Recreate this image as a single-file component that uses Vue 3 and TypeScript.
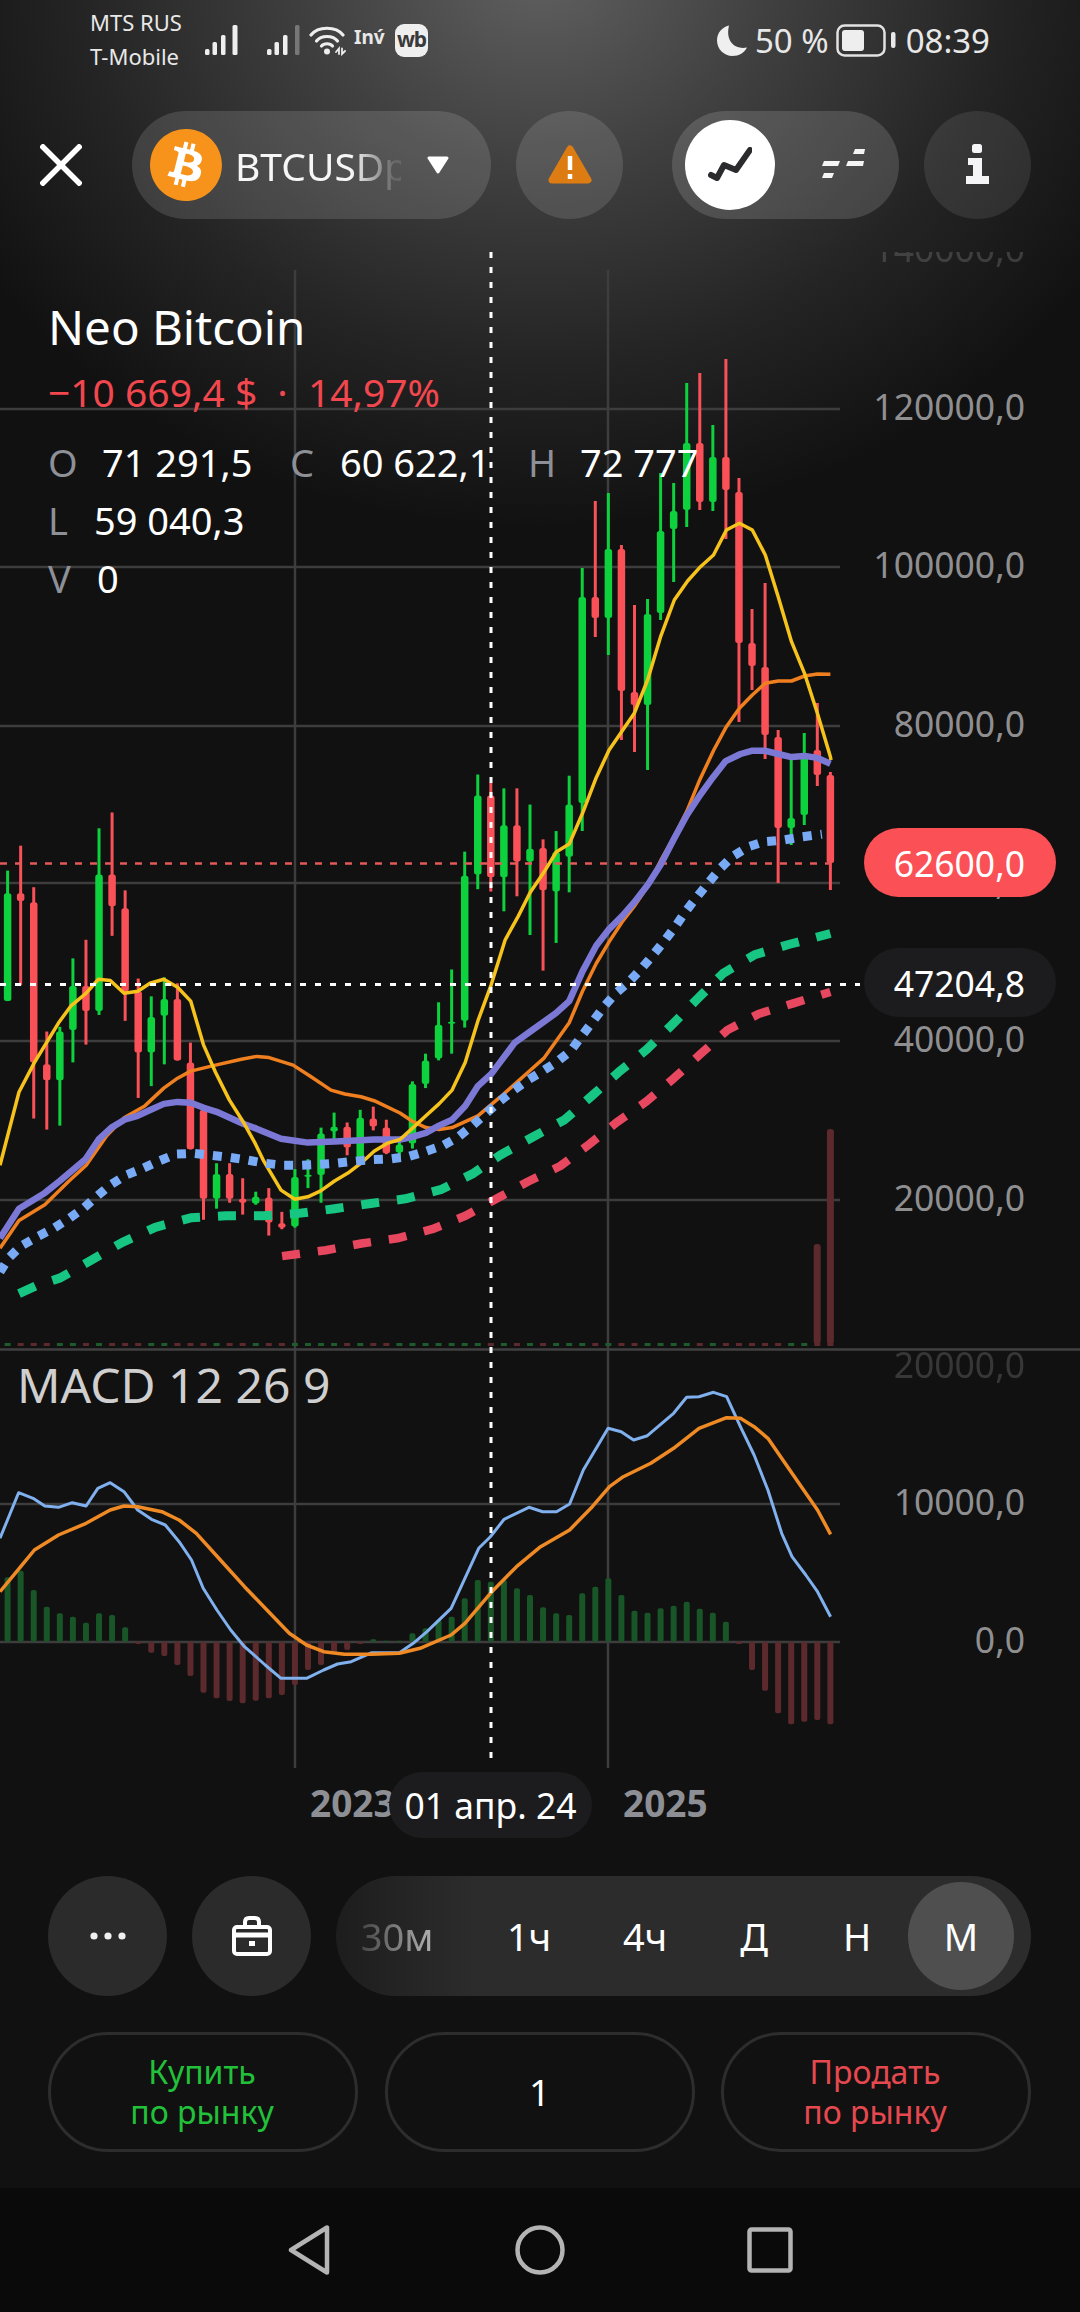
<script setup lang="ts">
type Candle = [number, number, number, number, number]
const STEP = 13.06
const xOf = (i: number) => 7.6 + STEP * i
const yA = (z: number) => 750 + z / 2.529

const earlyCandles: Candle[] = [
  [305,362,635,635,1],[242,362,382,595,0],[347,385,790,932,0],[712,795,835,960,0],[700,712,835,950,1],
  [527,597,708,790,1],[480,597,660,745,0],[198,315,660,670,1],[158,315,395,470,0],[355,400,610,685,0],
  [578,610,765,880,0],[623,675,765,850,1],[575,630,672,795,1],[590,630,785,785,0],[740,790,1010,1010,0],
  [910,910,1135,1188,0],[1045,1072,1135,1160,1],[1045,1072,1135,1145,0],[1083,1135,1145,1175,0],[1117,1130,1147,1150,1],
  [1108,1132,1195,1228,0],[1168,1197,1208,1212,0],[1060,1080,1205,1208,1],[1035,1074,1077,1108,1],[955,970,1075,1145,1],
  [917,953,965,995,1],[942,953,1005,1025,0],[910,930,1035,1040,1],[902,932,952,962,0],[935,955,1020,1022,0],
  [985,998,1018,1040,1],[838,845,995,1008,1],[768,785,845,855,1],[638,695,780,785,1],[555,687,690,768,1],
  [257,318,685,702,1],[62,115,315,352,1],[82,115,322,358,0],[97,190,322,408,1],[97,190,282,370,0],
  [138,250,282,468,1],[226,248,355,558,0],[205,258,358,488,1],[65,138,270,360,1]
]
const lateCandles: Candle[] = [
  [568,597,803,831,1],[501,597,618,637,0],[493,549,618,655,1],[545,549,691,740,0],[605,692,705,752,0],
  [599,614,705,770,1],[473,531,613,620,1],[483,511,529,582,1],[383,443,510,527,1],[373,443,502,510,0],
  [425,457,502,511,1],[359,457,490,539,0],[478,492,643,722,0],[609,643,666,690,0],[583,667,735,759,0],
  [730,737,828,883,0],[758,818,828,845,1],[733,753,815,825,1],[703,750,775,786,0],[772,775,863,890,0]
]
const candles = [
  ...earlyCandles.map((c) => [yA(c[0]), yA(c[1]), yA(c[2]), yA(c[3]), c[4]]),
  ...lateCandles
].map((c, i) => ({
  i, x: xOf(i), wickTop: c[0], bodyTop: c[1], bodyH: Math.max(c[2] - c[1], 2), wickBottom: c[3],
  color: c[4] ? '#0ed13e' : '#fa5158',
  volume: c[4] ? '#1d5a2c' : '#5c2a2c'
}))

const join = (list: number[], fx: (v: number) => number, fy: (v: number) => number) => {
  const out: string[] = []
  for (let k = 0; k < list.length; k += 2) out.push(`${fx(list[k]).toFixed(1)},${fy(list[k + 1]).toFixed(1)}`)
  return out.join(' ')
}
const leftX = (z: number) => z / 2.9
const rightX = (z: number) => 500 + z / 2.703
const yC = (z: number) => 250 + z / 3
const macdX = (z: number) => z / 1.452
const macdY = (z: number) => 1370 + z / 3

const yellow = [
  join([0,1050,55,865,100,790,170,690,205,648,250,615,285,580,320,583,360,615,400,610,435,590,475,580,515,600,553,635,590,745,625,815,665,885,705,940,740,995,765,1040,815,1113,855,1136,893,1130,930,1115,970,1090,1009,1070,1047,1045,1085,1015,1122,995,1160,985,1198,955,1235,925,1273,895,1311,860,1349,790,1386,685,1424,595,1465,480,1503,420], leftX, yA),
  join([82,360,118,310,152,258,187,238,223,160,260,70,295,0], rightX, yA),
  join([363,1390,399,1290,434,1160,471,1050,507,993,542,950,577,915,612,840,647,820,682,840,717,915,752,1040,788,1175,823,1270,858,1390,893,1520], rightX, yC),
  '831,760'
].join(' ')
const orange = [
  join([0,1260,55,1190,130,1150,200,1090,250,1050,310,975,360,930,420,900,475,855,515,830,553,812,625,797,700,782,745,775,780,778,850,797,900,825,960,860,1000,870,1047,877,1085,887,1160,918,1198,940,1235,955,1273,960,1311,955,1349,940,1386,925], leftX, yA),
  join([0,878,40,845,82,810,118,780,187,690,223,610,260,540,295,485,330,435,363,395,399,345,434,280,470,220,505,155,540,75,578,0], rightX, yA),
  join([612,1430,647,1375,682,1335,717,1300,752,1293,788,1293,823,1278,858,1272,893,1273], rightX, yC)
].join(' ')
const purple = [
  join([0,1235,55,1160,130,1120,173,1090,248,1035,286,985,323,955,361,935,399,925,437,910,475,895,515,890,553,892,591,905,628,915,705,945,742,957,815,983,855,988,893,993,970,990,1047,987,1085,985,1160,985,1198,978,1235,968,1273,950,1311,935,1349,900,1386,850,1424,820], leftX, yA),
  join([0,790,40,740,82,712,152,665,187,635,223,560,260,495,293,455,330,420,363,385,400,340,434,290,470,225,505,165,540,115,575,70,610,28,650,10,680,2,718,2,752,10,788,18,823,15,858,20,893,35], rightX, yA)
].join(' ')
const blue = [
  join([0,1320,25,1285,60,1255,110,1230,155,1210,200,1185,240,1160,282,1128,320,1100,365,1075,415,1058,460,1040,510,1022,560,1020,612,1025,665,1030,717,1037,768,1045,820,1050,872,1050,925,1048,977,1045,1030,1040,1080,1036,1132,1034,1185,1028,1235,1015,1285,1000,1330,978,1370,950], leftX, yA),
  join([0,888,35,862,75,835,115,812,155,788,192,760,222,722,252,685,282,648,313,615,350,585,383,552,414,518,445,482,475,445,502,408,532,372,562,337,595,300,627,270,670,245,713,232,763,228,813,220,870,213], rightX, yA)
].join(' ')
const teal = [
  join([55,1375,105,1355,175,1335,265,1290,355,1245,450,1207,553,1183,655,1178,762,1178,865,1172,970,1160,1075,1147,1175,1135,1278,1112,1370,1072], leftX, yA),
  join([0,1025,90,978,175,935,248,875,320,815,397,757,465,695,533,630,603,565,688,518,780,492,893,464], rightX, yA)
].join(' ')
const crimson = [
  join([818,1280,945,1265,1048,1248,1152,1235,1253,1212,1350,1178], leftX, yA),
  join([0,1130,75,1092,163,1052,240,998,318,940,397,888,470,830,543,768,615,708,700,667,795,640,893,612], rightX, yA)
].join(' ')
const macdBlue = join([0,505,27,368,48,385,65,408,85,412,105,398,125,408,142,355,160,338,180,365,200,420,220,448,240,465,260,515,278,570,295,655,315,720,335,780,355,830,385,885,408,925,445,925,470,900,490,882,510,875,540,848,580,848,600,820,620,785,655,715,675,625,695,535,712,500,732,448,768,412,788,425,808,425,827,402,847,300,883,175,902,185,920,210,940,197,978,130,997,82,1015,80,1036,67,1055,80,1075,170,1095,255,1115,360,1135,490,1150,560,1170,615,1187,665,1206,740], macdX, macdY)
const macdOrange = join([0,665,30,590,50,540,85,495,125,460,160,420,180,408,200,410,235,425,260,450,285,490,320,570,355,650,390,725,420,790,445,825,470,845,500,853,540,853,580,850,610,835,655,795,675,760,712,670,750,590,785,530,827,480,860,410,885,350,905,320,945,280,978,235,1015,175,1055,143,1075,145,1095,170,1115,205,1150,310,1187,420,1206,493], macdX, macdY)

const histTops = [622,602,660,710,730,740,758,730,735,772,822,848,858,885,918,968,985,993,1000,992,985,975,945,900,885,848,840,822,808,812,812,790,775,750,740,685,630,635,630,655,675,712,730,735,670,650,625,675,722,728,715,707,695,716,728,755,822,900,962,1030,1063,1055,1050,1063]
const ZERO = macdY(815)
const hist = histTops.map((t, i) => {
  const top = macdY(t)
  const up = top < ZERO
  return { i, x: xOf(i) - 3, y: up ? top : ZERO, h: Math.abs(top - ZERO), color: up ? '#185527' : '#5c2a2c' }
})

const gridMain = [409, 567, 726, 883, 1041, 1200]
const axisMain = [
  { t: '120000,0', y: 420 }, { t: '100000,0', y: 578 }, { t: '80000,0', y: 737 },
  { t: '60000,0', y: 894 }, { t: '40000,0', y: 1052 }, { t: '20000,0', y: 1211 }
]
const frames = [
  { label: '30м', cls: 'tf-faded' }, { label: '1ч', cls: '' }, { label: '4ч', cls: '' },
  { label: 'Д', cls: '' }, { label: 'Н', cls: '' }, { label: 'М', cls: 'tf-active' }
]
</script>

<template>
  <div class="screen">
    <header class="status">
      <div class="status-left">
        <div class="carrier"><span>MTS RUS</span><span>T-Mobile</span></div>
        <svg class="signal" width="34" height="30" viewBox="0 0 34 30" fill="#eee">
          <rect x="0" y="24" width="4.5" height="6" rx="1.5" /><rect x="7.5" y="17" width="4.5" height="13" rx="1.5" />
          <rect x="16" y="10" width="4.5" height="20" rx="1.5" /><rect x="27.5" y="0" width="5" height="30" rx="1.5" />
        </svg>
        <svg class="signal second" width="34" height="30" viewBox="0 0 34 30" fill="#eee">
          <rect x="0" y="24" width="4.5" height="6" rx="1.5" /><rect x="7.5" y="17" width="4.5" height="13" rx="1.5" />
          <rect x="16" y="10" width="4.5" height="20" rx="1.5" /><rect x="28" y="0" width="4.5" height="30" rx="1.5" fill="#777" />
        </svg>
        <svg class="wifi" width="38" height="32" viewBox="0 0 38 32" fill="none" stroke="#eee" stroke-width="3.2" stroke-linecap="round">
          <path d="M2 11 C9 2 27 2 34 11" /><path d="M7.5 17 C12 11 24 11 28.5 17" /><path d="M12.5 22 C15 19 21 19 23.5 22" />
          <circle cx="18" cy="27.5" r="3" fill="#eee" stroke="none" />
          <path d="M27 28 L30 24.5 V30 M33 24.5 V30 L36 27" stroke-width="1.8" />
        </svg>
        <span class="inv">Inv&#769;</span>
        <span class="wb">wb</span>
      </div>
      <div class="status-right">
        <svg width="31" height="31" viewBox="0 0 31 31" fill="#efefef">
          <path d="M12 .5 C5 2 0 8 0 15.5 C0 24 7 31 15.5 31 C22 31 27.5 27.5 30 22.5 C19 25 8 17 12 .5 Z" />
        </svg>
        <span class="pct">50 %</span>
        <svg class="battery" width="60" height="33" viewBox="0 0 60 33" fill="none">
          <rect x="1.5" y="1.5" width="47" height="30" rx="7" stroke="#e2e2e2" stroke-width="2.5" />
          <rect x="6" y="6" width="22" height="21" rx="3" fill="#eee" />
          <rect x="55" y="8" width="4.5" height="16" rx="2" fill="#e8e8e8" />
        </svg>
        <span class="clock">08:39</span>
      </div>
    </header>

    <nav class="topbar">
      <svg class="close" width="42" height="42" viewBox="0 0 42 42" stroke="#fff" stroke-width="5.5"><path d="M1 1 L41 41 M41 1 L1 41" /></svg>
      <div class="symbol">
        <svg class="coin" width="72" height="72" viewBox="0 0 24 24">
          <circle cx="12" cy="12" r="10" fill="#fff" />
          <path fill="#f7931a" d="M23.638 14.904c-1.602 6.43-8.113 10.34-14.542 8.736C2.67 22.05-1.244 15.525.362 9.105 1.962 2.67 8.475-1.243 14.9.358c6.43 1.605 10.342 8.115 8.738 14.548v-.002zm-6.35-4.613c.24-1.59-.974-2.45-2.64-3.03l.54-2.153-1.315-.33-.525 2.107c-.345-.087-.705-.167-1.064-.25l.526-2.127-1.32-.33-.54 2.165c-.285-.067-.565-.132-.84-.2l-1.815-.45-.35 1.407s.975.225.955.236c.535.136.63.486.615.766l-1.477 5.92c-.075.166-.24.406-.614.314.015.02-.96-.24-.96-.24l-.66 1.51 1.71.426.93.242-.54 2.19 1.32.327.54-2.17c.36.1.705.19 1.05.273l-.51 2.154 1.32.33.545-2.19c2.24.427 3.93.257 4.64-1.774.57-1.637-.03-2.58-1.217-3.196.854-.193 1.5-.76 1.68-1.93h.01zm-3.01 4.22c-.404 1.64-3.157.75-4.05.53l.72-2.9c.896.23 3.757.67 3.33 2.37zm.41-4.24c-.37 1.49-2.662.735-3.405.55l.654-2.64c.744.18 3.137.524 2.75 2.084v.006z" />
        </svg>
        <span class="ticker">BTCUSDp</span>
        <svg class="caret" width="22" height="18" viewBox="0 0 22 18" fill="#fff" stroke="#fff" stroke-width="3" stroke-linejoin="round"><path d="M2 2 H20 L11 16 Z" /></svg>
      </div>
      <div class="round alert">
        <svg width="44" height="40" viewBox="0 0 44 40">
          <path d="M22 4 L40 35 H4 Z" fill="#dd7c12" stroke="#dd7c12" stroke-width="7" stroke-linejoin="round" />
          <path d="M22 11 V25 M22 29 V34" stroke="#fff" stroke-width="4.5" />
        </svg>
      </div>
      <div class="mode">
        <div class="mode-on">
          <svg width="44" height="36" viewBox="0 0 44 36" fill="none" stroke="#2b2b2e" stroke-width="6" stroke-linejoin="round" stroke-linecap="round">
            <path d="M3 28 L9 31 L16 18 L28 23 L42 3" />
          </svg>
        </div>
        <svg class="mode-off" width="44" height="32" viewBox="0 0 44 32" fill="#f4f4f4">
          <path d="M3 12 H19 L17 17 H1 Z M3 24 H13 L11 29 H1 Z M27 12 H43 L42 17 H25 Z M34 0 H44 L43 5 H32 Z" />
        </svg>
      </div>
      <div class="round info">
        <svg width="24" height="42" viewBox="0 0 24 42" fill="#f5f5f7">
          <rect x="6" y="0" width="10" height="9" rx="2.5" />
          <path d="M2 14 H16 V32 H23 V40 H0 V32 H7 V21 H2 Z" />
        </svg>
      </div>
    </nav>

    <main class="chart">
      <svg class="plot" width="1080" height="1588" viewBox="0 252 1080 1588">
        <g stroke="#3d3d3d" stroke-width="2.5">
          <line v-for="y in gridMain" :key="y" x1="0" x2="840" :y1="y" :y2="y" />
          <line x1="0" x2="840" y1="1504" y2="1504" />
          <line x1="0" x2="840" y1="1642" y2="1642" />
          <line x1="295" x2="295" y1="270" y2="1768" />
          <line x1="608" x2="608" y1="270" y2="1768" />
        </g>
        <line x1="0" x2="1080" y1="1349.5" y2="1349.5" stroke="#404040" stroke-width="2.5" />

        <text class="axis faint" x="1025" y="262">140000,0</text>
        <text v-for="a in axisMain" :key="a.t" class="axis" x="1025" :y="a.y">{{ a.t }}</text>
        <text class="axis faint" x="1025" y="1378">20000,0</text>
        <text class="axis" x="1025" y="1515">10000,0</text>
        <text class="axis" x="1025" y="1653">0,0</text>
        <text class="year" x="310" y="1817">2023</text>
        <text class="year" x="623" y="1817">2025</text>
        <text class="macd-title" x="17" y="1403">MACD 12 26 9</text>

        <g v-for="c in candles" :key="c.i">
          <rect :x="c.x - 3" y="1343" width="6" height="3" :fill="c.volume" />
          <line :x1="c.x" :x2="c.x" :y1="c.wickTop" :y2="c.wickBottom" :stroke="c.color" stroke-width="3" />
          <rect :x="c.x - 3.75" :y="c.bodyTop" width="7.5" :height="c.bodyH" rx="2.5" :fill="c.color" />
        </g>
        <rect x="813.7" y="1244" width="7" height="100" rx="3" fill="#5c2a2c" />
        <rect x="826.9" y="1129" width="7" height="215" rx="3" fill="#5c2a2c" />

        <line x1="0" x2="830" y1="863.5" y2="863.5" stroke="#e35a5a" stroke-width="2.5" stroke-dasharray="7 8" />

        <g fill="none" stroke-linejoin="round">
          <polyline :points="orange" stroke="#f0801f" stroke-width="3.5" />
          <polyline :points="purple" stroke="#7c79d6" stroke-width="6.5" />
          <polyline :points="yellow" stroke="#f6c21c" stroke-width="3.5" />
          <polyline :points="blue" stroke="#78aaf6" stroke-width="9" stroke-dasharray="9 9" />
          <polyline :points="teal" stroke="#17c682" stroke-width="9" stroke-dasharray="18 18" />
          <polyline :points="crimson" stroke="#e7475f" stroke-width="8.5" stroke-dasharray="18 18" />
        </g>

        <rect v-for="h in hist" :key="h.i" :x="h.x" :y="h.y" width="6" :height="h.h" rx="2" :fill="h.color" />
        <g fill="none" stroke-linejoin="round">
          <polyline :points="macdBlue" stroke="#80b0ee" stroke-width="3" />
          <polyline :points="macdOrange" stroke="#ef8a24" stroke-width="3.5" />
        </g>

        <line x1="491" x2="491" y1="252" y2="1762" stroke="#fff" stroke-width="3" stroke-dasharray="6 9" />
        <line x1="0" x2="860" y1="984.5" y2="984.5" stroke="#fff" stroke-width="3" stroke-dasharray="6 9" />
      </svg>

      <section class="legend">
        <h1 class="name">Neo Bitcoin</h1>
        <p class="change">−10 669,4 $ <span class="sep">·</span> 14,97%</p>
        <div class="row row-ohlc"><span class="k">O</span><span>71 291,5</span><span class="k">C</span><span>60 622,1</span><span class="k">H</span><span>72 777</span></div>
        <div class="row row-l"><span class="k">L</span><span>59 040,3</span></div>
        <div class="row row-v"><span class="k">V</span><span>0</span></div>
      </section>

      <div class="tag tag-price">62600,0</div>
      <div class="tag tag-cross">47204,8</div>
      <div class="tag tag-date">01 апр. 24</div>
    </main>

    <section class="tools">
      <div class="tool">
        <svg width="36" height="8" viewBox="0 0 36 8" fill="#f0f0f0"><circle cx="4" cy="4" r="3.6" /><circle cx="18" cy="4" r="3.6" /><circle cx="32" cy="4" r="3.6" /></svg>
      </div>
      <div class="tool">
        <svg width="40" height="40" viewBox="0 0 40 40" fill="none" stroke="#fff" stroke-width="4">
          <path d="M13 11 V6 Q13 2 17 2 H23 Q27 2 27 6 V11" />
          <rect x="2" y="11" width="36" height="27" rx="3" />
          <path d="M2 19 H38" stroke-width="5" />
          <rect x="17" y="25" width="6" height="5" fill="#fff" stroke="none" />
        </svg>
      </div>
      <div class="frames">
        <span v-for="f in frames" :key="f.label" class="tf" :class="f.cls">{{ f.label }}</span>
      </div>
    </section>

    <section class="actions">
      <button class="act buy">Купить<br />по рынку</button>
      <button class="act qty">1</button>
      <button class="act sell">Продать<br />по рынку</button>
    </section>

    <footer class="navbar">
      <svg width="42" height="50" viewBox="0 0 42 50" fill="none" stroke="#b4b4b4" stroke-width="4.5" stroke-linejoin="round"><path d="M39 2.5 V47.5 L3 25 Z" /></svg>
      <svg width="50" height="50" viewBox="0 0 50 50" fill="none" stroke="#b4b4b4" stroke-width="4.5"><circle cx="25" cy="25" r="22.5" /></svg>
      <svg class="recent" width="46" height="46" viewBox="0 0 46 46" fill="none" stroke="#b4b4b4" stroke-width="4.5" stroke-linejoin="round"><rect x="2.5" y="2.5" width="41" height="41" rx="2" /></svg>
    </footer>
  </div>
</template>

<style scoped>
.screen {
  width: 1080px;
  height: 2312px;
  overflow: hidden;
  display: flex;
  flex-direction: column;
  color: #fff;
  font-family: "Noto Sans", "Open Sans", sans-serif;
  background:
    radial-gradient(ellipse 660px 560px at 540px -30px, #606060 0%, #404040 35%, #242424 70%, #111 100%),
    #111;
  background-repeat: no-repeat;
}
.status {
  height: 80px;
  flex: none;
  display: flex;
  justify-content: space-between;
  align-items: center;
  padding: 0 90px;
  color: #e8e8e8;
}
.status-left, .status-right { display: flex; align-items: center; }
.carrier {
  display: flex;
  flex-direction: column;
  font-size: 22px;
  line-height: 34px;
  width: 115px;
  margin-top: -2px;
  white-space: nowrap;
}
.signal.second { margin-left: 28px; }
.wifi { margin-left: 8px; }
.inv { font-size: 19px; font-weight: 700; margin-left: 7px; width: 35px; margin-top: -7px; }
.wb {
  width: 33px;
  height: 33px;
  background: #efefef;
  color: #3a3a3a;
  border-radius: 9px;
  font-size: 21px;
  font-weight: 700;
  line-height: 30px;
  text-align: center;
  letter-spacing: -1px;
  margin-left: 6px;
}
.pct { font-size: 33px; margin-left: 7px; }
.battery { margin-left: 7px; }
.clock { font-size: 33px; margin-left: 10px; }

.topbar {
  flex: none;
  margin-top: 31px;
  height: 108px;
  display: flex;
  align-items: center;
  padding-left: 40px;
}
.symbol {
  width: 359px;
  height: 108px;
  margin-left: 50px;
  border-radius: 54px;
  background: rgba(255, 255, 255, 0.13);
  display: flex;
  align-items: center;
  padding-left: 18px;
  box-sizing: border-box;
  flex: none;
}
.ticker {
  width: 166px;
  margin-left: 13px;
  font-size: 39px;
  color: #f6f6f6;
  white-space: nowrap;
  overflow: hidden;
  -webkit-mask-image: linear-gradient(90deg, #000 70%, rgba(0, 0, 0, 0.12) 96%);
  mask-image: linear-gradient(90deg, #000 70%, rgba(0, 0, 0, 0.12) 96%);
}
.caret { margin-left: 26px; }
.round {
  width: 107px;
  height: 108px;
  border-radius: 50%;
  display: flex;
  align-items: center;
  justify-content: center;
  flex: none;
  background: rgba(255, 255, 255, 0.12);
}
.alert { margin-left: 25px; }
.mode {
  margin-left: 49px;
  width: 227px;
  height: 108px;
  border-radius: 54px;
  background: rgba(255, 255, 255, 0.14);
  display: flex;
  align-items: center;
  padding-left: 13px;
  box-sizing: border-box;
  flex: none;
}
.mode-on {
  width: 90px;
  height: 90px;
  border-radius: 50%;
  background: #fff;
  display: flex;
  align-items: center;
  justify-content: center;
}
.mode-off { margin-left: 46px; }
.info { margin-left: 25px; background: rgba(255, 255, 255, 0.09); }

.chart {
  flex: none;
  position: relative;
  margin-top: 33px;
  height: 1588px;
}
.plot { display: block; }
.axis { font-size: 35.5px; fill: #8f8f92; text-anchor: end; }
.axis.faint { opacity: 0.3; }
.year { font-size: 37px; font-weight: 700; fill: #8d8f95; }
.macd-title { font-size: 48px; fill: #cfcfcf; }

.legend { position: absolute; left: 48px; top: 46px; font-size: 38px; line-height: 58px; }
.name { margin: 0; font-size: 47.5px; font-weight: 400; line-height: 58px; }
.change { margin: 7px 0 0; font-size: 39px; line-height: 58px; color: #f2474e; white-space: nowrap; }
.sep { margin: 0 10px; }
.row { display: grid; }
.row-ohlc { grid-template-columns: 54px 188px 50px 188px 52px auto; margin-top: 12px; }
.row-l { grid-template-columns: 46px auto; }
.row-v { grid-template-columns: 49px auto; }
.k { color: #8e9098; }

.tag {
  position: absolute;
  left: 864px;
  width: 192px;
  height: 69px;
  box-sizing: border-box;
  padding-right: 31px;
  border-radius: 35px;
  font-size: 35.5px;
  line-height: 71px;
  text-align: right;
  color: #fff;
}
.tag-price { top: 576px; background: #fb5056; }
.tag-cross { top: 696px; background: #1c1c1e; }
.tag-date {
  left: 389px;
  top: 1520px;
  width: 203px;
  height: 66px;
  padding: 0;
  line-height: 66px;
  text-align: center;
  background: #1c1c1e;
  font-size: 35.5px;
  border-radius: 33px;
}

.tools {
  flex: none;
  margin-top: 36px;
  height: 120px;
  display: flex;
  padding-left: 48px;
  gap: 25px;
}
.tool {
  width: 119px;
  height: 120px;
  border-radius: 50%;
  background: #2b2b2b;
  display: flex;
  align-items: center;
  justify-content: center;
}
.frames {
  width: 695px;
  height: 120px;
  border-radius: 60px;
  background: linear-gradient(90deg, #1d1d1d, #2c2c2c 20%);
  display: grid;
  grid-template-columns: 122px 142px 90px 128px 78px 106px;
  column-gap: 0;
  align-items: center;
  font-size: 38px;
  text-align: center;
}
.tf { line-height: 108px; }
.tf-faded {
  color: #aaa;
  -webkit-mask-image: linear-gradient(90deg, rgba(0,0,0,.2) 15%, #000 75%);
  mask-image: linear-gradient(90deg, rgba(0,0,0,.2) 15%, #000 75%);
}
.tf-active { width: 106px; height: 108px; margin-left: 12px; border-radius: 50%; background: #4f4f4f; }

.actions {
  flex: none;
  margin-top: 36px;
  height: 120px;
  display: flex;
  padding-left: 48px;
  gap: 26.5px;
}
.act {
  width: 310px;
  height: 120px;
  box-sizing: border-box;
  border: 3px solid #2d2d2d;
  border-radius: 60px;
  background: transparent;
  font-family: inherit;
  font-size: 32px;
  line-height: 40px;
  padding: 0 2px 0 0;
}
.buy { color: #22c13a; }
.qty { color: #fff; font-size: 37px; padding: 0; }
.sell { color: #e5494f; }

.navbar {
  flex: none;
  margin-top: 36px;
  height: 124px;
  background: #0a0a0a;
  display: flex;
  align-items: center;
  padding-left: 288px;
  gap: 185px;
}
.recent { margin-left: -3px; }
</style>

<style>
body { background: #111; }
</style>
